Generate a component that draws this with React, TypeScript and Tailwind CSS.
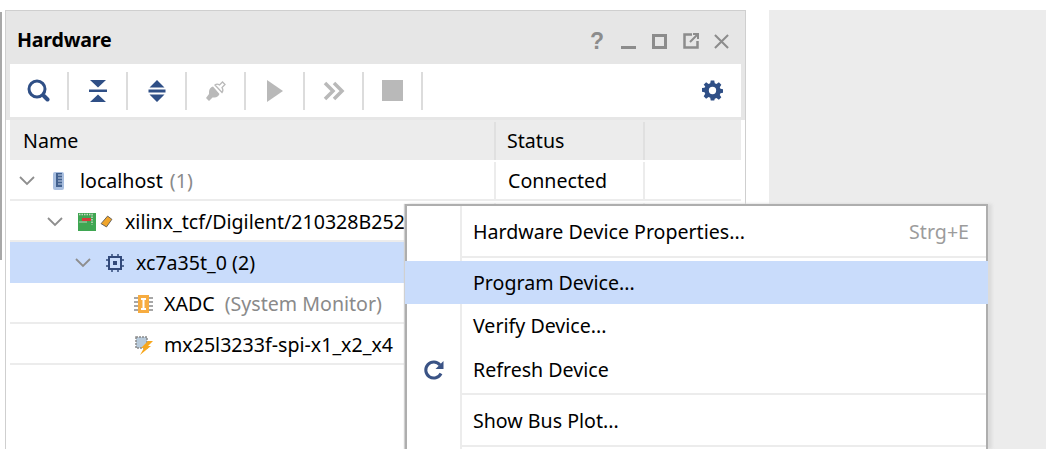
const blue = "#2f4f86"
const gray = "#b9b9b9"

function Sep() {
  return <div className="w-[2px] h-[38px] bg-[#dcdcdc]" />
}

function ToolBtn({ children }: { children: React.ReactNode }) {
  return <div className="w-[57px] h-[38px] flex items-center justify-center">{children}</div>
}

function Toolbar() {
  return (
    <div className="h-[53px] bg-white flex items-center pr-[18px]">
      <ToolBtn>
        <svg width="23" height="23" viewBox="0 0 23 23">
          <circle cx="10" cy="10" r="8" fill="none" stroke={blue} strokeWidth="3" />
          <path d="M17 17l3.500 3.500" stroke={blue} strokeWidth="4" strokeLinecap="round" />
        </svg>
      </ToolBtn>
      <Sep />
      <ToolBtn>
        <svg width="20" height="24" viewBox="0 0 20 24" fill={blue}>
          <path d="M2 1h16l-8 7.500zM1 10.500h18v2.500H1zM10 15.500l8 7.500H2z" />
        </svg>
      </ToolBtn>
      <Sep />
      <ToolBtn>
        <svg width="20" height="24" viewBox="0 0 20 24" fill={blue}>
          <path d="M10 1l7.500 7.500h-15zM1.500 10.500h17v3h-17zM2.500 15.500h15L10 23z" />
        </svg>
      </ToolBtn>
      <Sep />
      <ToolBtn>
        <svg width="22" height="22" viewBox="0 0 22 22" fill="none">
          <path d="M8 6.500a6 6 0 0 0-4 5.500v2L1 18l3 3 3.500-3.500h2a6 6 0 0 0 5-3.500z" fill={gray} />
          <path d="M10 5c2-1.500 3-1 4.500 0l3-3 2.500 2.500-3 3c1 1.500 1.500 3 0 5z" fill="#fff" stroke={gray} strokeWidth="1.300" />
        </svg>
      </ToolBtn>
      <Sep />
      <ToolBtn>
        <svg width="18" height="22" viewBox="0 0 18 22" fill={gray}>
          <path d="M1 0l16 11L1 22z" />
        </svg>
      </ToolBtn>
      <Sep />
      <ToolBtn>
        <svg width="22" height="20" viewBox="0 0 22 20" fill="none" stroke={gray} strokeWidth="3.500">
          <path d="M2 2l8 8-8 8M11 2l8 8-8 8" />
        </svg>
      </ToolBtn>
      <Sep />
      <ToolBtn>
        <div className="w-[21px] h-[21px] bg-[#b9b9b9]" />
      </ToolBtn>
      <Sep />
      <div className="flex-1" />
      <svg width="21" height="21" viewBox="0 0 24 24" fill={blue}>
        <path
          fillRule="evenodd"
          d="M10 .5h4l.6 3.200 1.900.8 2.800-1.800 2.800 2.800-1.800 2.700.8 1.900 3.200.4v4l-3.200.6-.8 1.900 1.800 2.700-2.800 2.800-2.800-1.800-1.900.8L14 23.500h-4l-.6-3.200-1.900-.8-2.800 1.800-2.800-2.800 1.800-2.700-.8-1.900-3.200-.6v-4l3.200-.4.8-1.900L1.900 5.500l2.800-2.800L7.500 4.500l1.900-.8zM12 7.800a4.200 4.200 0 100 8.400 4.200 4.200 0 000-8.400z"
        />
      </svg>
    </div>
  )
}

function TitleBar() {
  return (
    <div className="h-[53px] flex items-center pt-[7px] pl-[7px] pr-[12px] text-[#8c8c8c]">
      <span className="text-[19.6px] font-bold text-black tracking-[-0.2px] -mt-[2px]">Hardware</span>
      <div className="flex-1" />
      <span className="w-[18px] text-[23px] font-bold leading-none text-center font-['Liberation_Sans',sans-serif]">?</span>
      <div className="w-[15px] h-[3px] bg-[#8c8c8c] ml-[15px] mt-[13px]" />
      <div className="w-[15px] h-[15px] border-[3px] border-[#8c8c8c] ml-[16px]" />
      <svg width="16" height="16" viewBox="0 0 16 16" fill="none" stroke="#8c8c8c" className="ml-[16px]">
        <path d="M9 1.500H1.500v13h13V8" strokeWidth="2.500" />
        <path d="M7 9l7-7M10 1h5v5" strokeWidth="2" />
      </svg>
      <svg width="15" height="15" viewBox="0 0 16 16" fill="none" stroke="#8c8c8c" strokeWidth="2.200" className="ml-[15px]">
        <path d="M1 1l14 14M15 1L1 15" />
      </svg>
    </div>
  )
}

function Chevron() {
  return (
    <svg width="16" height="10" viewBox="0 0 16 10" fill="none" stroke="#8e8e8e" strokeWidth="1.800">
      <path d="M1 1l7 7 7-7" />
    </svg>
  )
}

function Row({
  indent,
  arrow = true,
  icon,
  selected,
  status,
  children,
}: {
  indent: number
  arrow?: boolean
  icon: React.ReactNode
  selected?: boolean
  status?: string
  children: React.ReactNode
}) {
  return (
    <div className={`flex h-[41px] ${selected ? "bg-[#c9dcfb]" : "border-b-2 border-[#ececec] pt-[2px]"}`}>
      <div className="w-[484px] flex items-center whitespace-nowrap overflow-hidden text-[19.6px]" style={{ paddingLeft: indent }}>
        <div className="w-[16px] flex items-center">{arrow ? <Chevron /> : null}</div>
        {icon}
        {children}
      </div>
      <div className="w-[151px] border-l-2 border-r-2 border-[#ececec] text-[19.6px] pl-[12px] flex items-center">{status}</div>
    </div>
  )
}

function HardwareTable() {
  return (
    <div className="text-black">
      <div className="h-[40px] bg-[#ececec] flex text-[19.6px] pt-[2px]">
        <div className="w-[484px] pl-[13px] flex items-center">Name</div>
        <div className="w-[151px] border-l-2 border-r-2 border-[#e0e0e0] pl-[11px] flex items-center">Status</div>
      </div>
      <div className="bg-white">
        <Row
          indent={9}
          status="Connected"
          icon={
            <svg width="14" height="20" viewBox="0 0 14 20" className="ml-[17px] mr-[14px]">
              <rect x="1" y="1" width="11" height="18" rx="2" fill="#a9bfe0" />
              <rect x="4" y="2" width="6" height="14" fill="#42618f" />
              <path d="M6 4h4M6 7h4M6 10h4M6 13h4" stroke="#c4d3ea" strokeWidth="1" />
            </svg>
          }
        >
          localhost <span className="text-[#8a8a8a] ml-[7px]">(1)</span>
        </Row>
        <Row
          indent={37}
          icon={
            <span className="flex items-center ml-[15px] mr-[12px] gap-[4px]">
              <svg width="18" height="18" viewBox="0 0 18 18">
                <rect width="18" height="18" fill="#3fa652" />
                <path d="M1 1.500h13v10" fill="none" stroke="#c9d9c5" strokeWidth="1.500" strokeDasharray="1.500 1" />
                <rect x="4" y="5" width="9" height="3" fill="#d8393a" />
                <path d="M1 9h8" stroke="#b9cfb7" strokeWidth="1" />
              </svg>
              <svg width="13" height="13" viewBox="0 0 12 12">
                <path d="M7 1l4 3-5 7-5-3z" fill="#f0a52b" stroke="#555" strokeWidth="0.800" />
              </svg>
            </span>
          }
        >
          xilinx_tcf/Digilent/210328B252
        </Row>
        <Row
          indent={65}
          selected
          icon={
            <svg width="18" height="18" viewBox="0 0 18 18" fill="none" stroke="#32497a" className="ml-[15px] mr-[12px]">
              <rect x="3" y="3" width="12" height="12" strokeWidth="2" />
              <rect x="7" y="7" width="4" height="4" fill="#32497a" strokeWidth="0" />
              <path d="M6 0v3M12 0v3M6 15v3M12 15v3M0 6h3M0 12h3M15 6h3M15 12h3" strokeWidth="1.500" />
            </svg>
          }
        >
          xc7a35t_0 (2)
        </Row>
        <Row
          indent={94}
          arrow={false}
          icon={
            <svg width="19" height="18" viewBox="0 0 19 18" className="ml-[14px] mr-[11px]">
              <path d="M0 3h19M0 7h19M0 11h19M0 15h19" stroke="#8a8a8a" strokeWidth="1.500" />
              <rect x="4" y="0" width="11" height="18" fill="#f7ac40" />
              <path d="M7 4h5M7 14h5M9.500 4v10" stroke="#fff" strokeWidth="2" />
            </svg>
          }
        >
          XADC <span className="text-[#8a8a8a] ml-[10px]">(System Monitor)</span>
        </Row>
        <Row
          indent={94}
          arrow={false}
          icon={
            <svg width="19" height="20" viewBox="0 0 19 20" className="ml-[14px] mr-[11px]">
              <rect x="2" y="2" width="11" height="11" fill="#b7cadb" stroke="#8b8b8b" strokeWidth="1.500" strokeDasharray="2 1" />
              <path d="M14 6h5l-5 5h3L6 20l4-7H7z" fill="#f7a71d" />
            </svg>
          }
        >
          mx25l3233f-spi-x1_x2_x4
        </Row>
      </div>
    </div>
  )
}

function MenuItem({
  height,
  selected,
  icon,
  shortcut,
  children,
}: {
  height: string
  selected?: boolean
  icon?: React.ReactNode
  shortcut?: string
  children: React.ReactNode
}) {
  return (
    <div className={`flex items-center ${height} ${selected ? "bg-[#c9dcfb] -mx-[2px] px-[2px]" : ""}`}>
      <div className={`w-[55px] h-full flex items-center justify-center ${selected ? "" : "border-r-2 border-[#ececec]"}`}>{icon}</div>
      <div className="flex-1 pl-[11px] pt-[1px]">{children}</div>
      {shortcut ? <span className="text-[#9c9c9c] pr-[17px] pt-[1px]">{shortcut}</span> : null}
    </div>
  )
}

function MenuSep({ height, top }: { height: string; top?: boolean }) {
  return (
    <div className={`flex ${height}`}>
      <div className="w-[55px] border-r-2 border-[#ececec]" />
      <div className={`flex-1 flex flex-col ${top ? "justify-start" : "justify-center"}`}>
        <div className="h-[2px] bg-[#ececec]" />
      </div>
    </div>
  )
}

function ContextMenu() {
  return (
    <div className="absolute left-[405px] top-[204px] w-[583px] h-[245px] bg-white border-t-2 border-x-2 border-[#aeaeae] text-[19.6px] text-black shadow-[4px_0_3px_#dcdcdc,-1px_0_1px_#d0d0d0]">
      <MenuItem height="h-[50px]" shortcut="Strg+E">
        Hardware Device Properties...
      </MenuItem>
      <MenuSep height="h-[5px]" top />
      <MenuItem height="h-[43px]" selected>
        Program Device...
      </MenuItem>
      <MenuItem height="h-[43px]">Verify Device...</MenuItem>
      <MenuItem
        height="h-[45px]"
        icon={
          <svg width="22" height="22" viewBox="0 0 22 22" fill="none" stroke="#3a5385" strokeWidth="3">
            <path d="M18 14.500A8 8 0 1 1 17 6" />
            <path d="M20.500 2v8h-8z" fill="#3a5385" stroke="none" />
          </svg>
        }
      >
        Refresh Device
      </MenuItem>
      <MenuSep height="h-[4px]" />
      <MenuItem height="h-[49px]">Show Bus Plot...</MenuItem>
      <MenuSep height="h-[4px]" top />
    </div>
  )
}

export default function App() {
  return (
    <div className="relative w-[1046px] h-[449px] overflow-hidden bg-white font-['Noto_Sans',sans-serif]">
      <div className="flex h-full pt-[10px]">
        <div className="w-[2px] h-[248px] mt-[2px] bg-[#a8a8a8]" />
        <div className="w-[741px] ml-[3px] border-t border-x border-[#cfcfcf]">
          <div className="bg-[#e6e6e6] px-[4px] h-[109px]">
            <TitleBar />
            <Toolbar />
          </div>
          <div className="px-[4px]">
            <HardwareTable />
          </div>
        </div>
        <div className="w-[277px] ml-[23px] bg-[#ececec]" />
      </div>
      <ContextMenu />
    </div>
  )
}
